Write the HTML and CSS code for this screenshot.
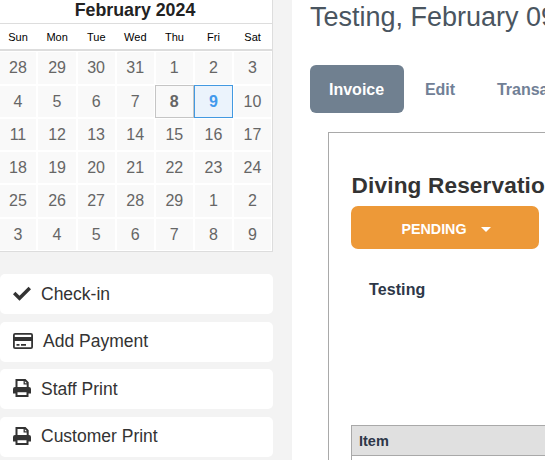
FILE: index.html
```html
<!DOCTYPE html>
<html lang="en">
<head>
<meta charset="utf-8">
<title>Invoice</title>
<link rel="stylesheet" href="styles.css">
</head>
<body>
<aside class="sidebar">
  <section class="calendar">
    <h2 class="month">February 2024</h2>
    <div class="weekdays"><span>Sun</span><span>Mon</span><span>Tue</span><span>Wed</span><span>Thu</span><span>Fri</span><span>Sat</span></div>
    <div class="days">
      <span>28</span><span>29</span><span>30</span><span>31</span><span>1</span><span>2</span><span>3</span>
      <span>4</span><span>5</span><span>6</span><span>7</span><span class="today">8</span><span class="selected">9</span><span>10</span>
      <span>11</span><span>12</span><span>13</span><span>14</span><span>15</span><span>16</span><span>17</span>
      <span>18</span><span>19</span><span>20</span><span>21</span><span>22</span><span>23</span><span>24</span>
      <span>25</span><span>26</span><span>27</span><span>28</span><span>29</span><span>1</span><span>2</span>
      <span>3</span><span>4</span><span>5</span><span>6</span><span>7</span><span>8</span><span>9</span>
    </div>
  </section>
  <nav class="actions">
    <a class="action"><svg class="icon" viewBox="0 0 18 18"><path d="M1.2 9 6.5 14.2 16.8 4" fill="none" stroke="#333" stroke-width="3.5"/></svg>Check-in</a>
    <a class="action"><svg class="icon icon-card" viewBox="0 0 20 18"><rect x=".9" y="1.9" width="18.2" height="14.2" rx="1.2" fill="none" stroke="#333" stroke-width="1.8"/><path d="M1 5h18v4H1zM3.5 12h3v1.7h-3zM8 12h5v1.7H8z" fill="#333"/></svg>Add Payment</a>
    <a class="action"><svg class="icon" viewBox="0 0 18 18"><path d="M3.5 8V1h8.6l2.6 2.6V8" fill="none" stroke="#333" stroke-width="2"/><path d="M11.2 1v3.8H15" fill="none" stroke="#333" stroke-width="1.3"/><path d="M2 8h14a2 2 0 0 1 2 2v4.6h-3V12H3v2.6H0V10a2 2 0 0 1 2-2z" fill="#333"/><path d="M3.5 12.2h11V17h-11z" fill="#fff" stroke="#333" stroke-width="2"/></svg>Staff Print</a>
    <a class="action"><svg class="icon" viewBox="0 0 18 18"><path d="M3.5 8V1h8.6l2.6 2.6V8" fill="none" stroke="#333" stroke-width="2"/><path d="M11.2 1v3.8H15" fill="none" stroke="#333" stroke-width="1.3"/><path d="M2 8h14a2 2 0 0 1 2 2v4.6h-3V12H3v2.6H0V10a2 2 0 0 1 2-2z" fill="#333"/><path d="M3.5 12.2h11V17h-11z" fill="#fff" stroke="#333" stroke-width="2"/></svg>Customer Print</a>
  </nav>
</aside>
<main class="content">
  <h1 class="title">Testing, February 09</h1>
  <nav class="tabs"><a class="tab active">Invoice</a><a class="tab">Edit</a><a class="tab">Transactions</a></nav>
  <section class="invoice">
    <h2 class="heading">Diving Reservation</h2>
    <button class="status">PENDING<i class="caret"></i></button>
    <p class="customer">Testing</p>
    <div class="items"><div class="items-head">Item</div></div>
  </section>
</main>
</body>
</html>
```
FILE: styles.css
```css
* { box-sizing: border-box; }
body {
  margin: 0;
  width: 545px;
  height: 460px;
  display: flex;
  overflow: hidden;
  background: #fff;
  font-family: "Liberation Sans", Arial, sans-serif;
}
h1, h2, p { margin: 0; white-space: nowrap; }

.sidebar { width: 292px; flex: none; background: #f3f3f3; overflow: hidden; }
.calendar {
  width: 275px;
  height: 252px;
  margin-left: -2px;
  background: #fff;
  border-right: 1px solid #ddd;
  border-bottom: 1px solid #ddd;
}
.month {
  height: 24px;
  line-height: 20px;
  border-bottom: 1px solid #ddd;
  font-size: 17.8px;
  text-align: center;
  color: #222;
}
.weekdays {
  display: grid;
  grid-template-columns: repeat(7, 39.1px);
  height: 27px;
  line-height: 27px;
  border-bottom: 2px solid #ddd;
  font-size: 11px;
  padding-left: .5px;
  text-align: center;
  color: #000;
}
.days {
  display: grid;
  grid-template: 33.8px repeat(5, 33.2px) / repeat(7, 39.1px);
  padding-left: .4px;
  font-size: 16px;
  text-align: center;
  color: #666;
}
.days span { margin: 1px; line-height: 31.6px; background: #f9f9f9; }
.days .today, .days .selected { margin: 0; font-weight: bold; border: 1px solid #c5c5c5; }
.days .selected { color: #4299ec; background: #ebf3fc; border-color: #4299e1; }

.actions { display: grid; gap: 7.6px; margin-top: 22px; width: 273px; }
.action {
  display: flex;
  align-items: center;
  height: 40px;
  padding-left: 13px;
  border-radius: 5px;
  background: #fff;
  font-size: 17.5px;
  color: #333;
}
.icon { width: 18px; height: 18px; margin: 0 10px 2px 0; }
.icon-card { width: 20px; }

.content { flex: 1; min-width: 0; padding-left: 18px; overflow: hidden; }
.title { height: 65px; line-height: 34px; font-size: 27px; font-weight: normal; color: #4a5560; }
.tabs { display: flex; height: 48px; line-height: 50px; font-size: 16px; font-weight: bold; color: #718096; }
.tab { flex: none; padding: 0 20.9px; }
.tab.active { width: 94px; height: 48px; padding: 0 19px; border-radius: 6px; background: #708090; color: #fff; }
.invoice { margin: 19px 0 0 18px; width: 400px; height: 400px; padding: 39px 22px; border: 1px solid #a9a9a9; }
.heading { height: 34px; padding-left: .6px; line-height: 28px; font-size: 22.6px; letter-spacing: .15px; color: #333; }
.status {
  display: flex;
  align-items: center;
  justify-content: center;
  width: 188px;
  height: 43px;
  padding: 3px 0 0 2px;
  border: 0;
  border-radius: 7px;
  background: #ed9938;
  color: #fff;
  font: bold 14.3px "Liberation Sans", Arial, sans-serif;
}
.caret { margin-left: 14px; border: 5px solid transparent; border-top-color: #fff; border-bottom: 0; }
.customer { margin: 31px 0 0 18px; height: 145px; line-height: 19px; font-size: 16px; letter-spacing: .1px; font-weight: bold; color: #2d3748; }
.items { height: 80px; border: 1px solid #a9a9a9; }
.items-head { height: 30px; padding-left: 7px; line-height: 30px; border-bottom: 1px solid #a9a9a9; background: #e0e0e0; font-size: 14.5px; font-weight: bold; color: #2d3748; }
```
